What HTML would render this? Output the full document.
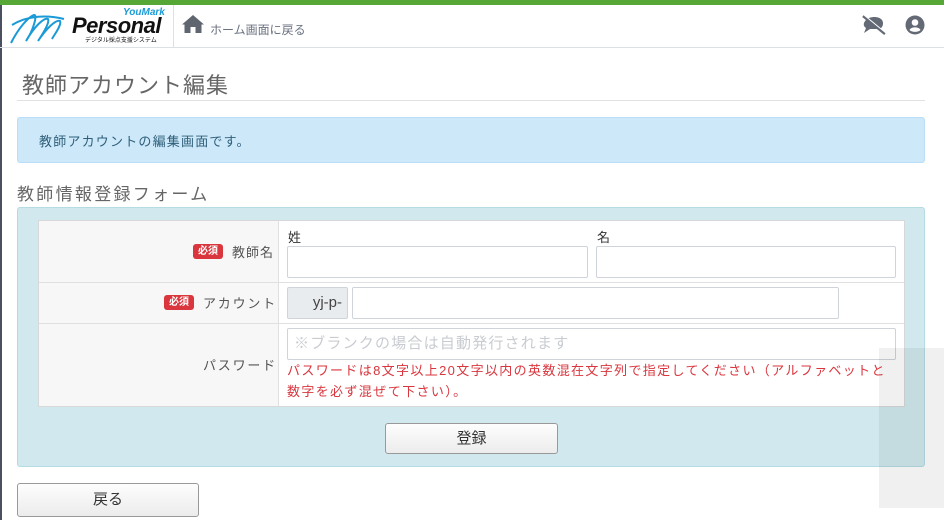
<!DOCTYPE html>
<html><head><meta charset="utf-8">
<style>
*{box-sizing:border-box;margin:0;padding:0}
body{width:944px;height:520px;overflow:hidden;background:#fff;font-family:"Liberation Sans","Noto Sans CJK JP",sans-serif;position:relative;color:#333}
.abs{position:absolute}
.lb{letter-spacing:1px}
.inp{position:absolute;border:1px solid #ced4da;background:#fff;border-radius:2px}
.btn{position:absolute;border:1px solid #999;border-radius:3px;background:linear-gradient(#fdfdfd,#ececec);text-align:center;font-size:15px;color:#333}
</style></head><body>
<div class="abs" style="left:0;top:0;width:944px;height:5px;background:#57a737"></div>
<div class="abs" style="left:0;top:5px;width:2px;height:515px;background:#4a5060"></div>
<div class="abs" style="left:0;top:47px;width:944px;height:1px;background:#dde0e4"></div>
<div class="abs" style="left:173px;top:5px;width:1px;height:42px;background:#dde0e4"></div>
<!-- logo -->
<svg class="abs" style="left:8px;top:9px" width="60" height="38" viewBox="0 0 60 38">
<path d="M3 34 C10 20 20 8 26 6 C30 5 25 22 18 32 C26 18 36 8 40 10 C42 14 34 26 30 32 C38 20 48 10 52 12 C54 16 46 26 44 30 M4 16 C20 6 40 6 56 10" fill="none" stroke="#1a9ad6" stroke-width="2"/>
</svg>
<div class="abs" style="left:123px;top:7px;font-size:10px;font-weight:bold;font-style:italic;color:#1a9ad6">YouMark</div>
<div class="abs" style="left:72px;top:13px;font-size:22px;font-weight:bold;font-style:italic;color:#111;letter-spacing:-0.5px">Personal</div>
<div class="abs" style="left:85px;top:35px;font-size:6px;color:#111">デジタル採点支援システム</div>
<svg class="abs" style="left:181px;top:14px" width="24" height="20" viewBox="0 0 24 20"><path d="M12 1 L1 10.5 L3.5 10.5 L3.5 19 L9.5 19 L9.5 13 L14.5 13 L14.5 19 L20.5 19 L20.5 10.5 L23 10.5 Z" fill="#5f6670"/></svg>
<div class="abs" style="left:210px;top:21px;font-size:12px;color:#6b7280">ホーム画面に戻る</div>
<svg class="abs" style="left:861px;top:15px" width="26" height="20" viewBox="0 0 26 20"><path d="M5 5 C9 1 18 1 21 5 C23 8 22 12 19 14 L9 14 L3 18 L5 13 C2 11 2 8 5 5Z" fill="#646a75"/><path d="M2 1 L24 19" stroke="#646a75" stroke-width="2.5"/><path d="M3 0 L25 18" stroke="#fff" stroke-width="1"/></svg>
<svg class="abs" style="left:905px;top:15px" width="20" height="20" viewBox="0 0 20 20"><circle cx="10" cy="10" r="9.5" fill="#646a75"/><circle cx="10" cy="7.5" r="3.3" fill="#fff"/><path d="M4.5 15 C6 11.5 14 11.5 15.5 15 C13 17.5 7 17.5 4.5 15Z" fill="#fff"/></svg>

<div class="abs" style="left:22px;top:68px;font-size:22px;color:#666;letter-spacing:1px">教師アカウント編集</div>
<div class="abs" style="left:17px;top:100px;width:908px;height:1px;background:#dfe1e3"></div>
<div class="abs" style="left:17px;top:117px;width:908px;height:46px;background:#cce8f9;border:1px solid #b9def5;border-radius:3px"></div>
<div class="abs lb" style="left:39px;top:131px;font-size:13px;color:#2f5f7a;letter-spacing:1.2px">教師アカウントの編集画面です。</div>
<div class="abs" style="left:17px;top:180px;font-size:17px;color:#666;letter-spacing:2.3px">教師情報登録フォーム</div>
<div class="abs" style="left:17px;top:207px;width:908px;height:260px;background:#d1e9ee;border:1px solid #b5dbe3;border-radius:3px"></div>
<div class="abs" style="left:38px;top:220px;width:867px;height:187px;background:#fff;border:1px solid #d8d8d8"></div>
<div class="abs" style="left:39px;top:221px;width:239px;height:185px;background:#f7f7f7"></div>
<div class="abs" style="left:278px;top:221px;width:1px;height:185px;background:#e0e0e0"></div>
<div class="abs" style="left:39px;top:282px;width:865px;height:1px;background:#e0e0e0"></div>
<div class="abs" style="left:39px;top:323px;width:865px;height:1px;background:#e0e0e0"></div>

<div class="abs" style="left:193px;top:244px;width:30px;height:15px;background:#d9363e;border-radius:3px;color:#fff;font-size:10px;font-weight:bold;text-align:center;line-height:15px">必須</div>
<div class="abs lb" style="left:232px;top:242px;font-size:13px;color:#555">教師名</div>
<div class="abs" style="left:164px;top:295px;width:30px;height:15px;background:#d9363e;border-radius:3px;color:#fff;font-size:10px;font-weight:bold;text-align:center;line-height:15px">必須</div>
<div class="abs" style="left:203px;top:293px;font-size:13px;color:#555;letter-spacing:1.8px">アカウント</div>
<div class="abs" style="left:203px;top:355px;font-size:13px;color:#555;letter-spacing:1.8px">パスワード</div>

<div class="abs" style="left:288px;top:227px;font-size:13px;color:#333">姓</div>
<div class="abs" style="left:597px;top:227px;font-size:13px;color:#333">名</div>
<div class="inp" style="left:287px;top:246px;width:301px;height:32px"></div>
<div class="inp" style="left:596px;top:246px;width:300px;height:32px"></div>
<div class="abs" style="left:287px;top:287px;width:61px;height:32px;background:#e9ecef;border:1px solid #ced4da;border-radius:2px;font-size:15px;color:#444;text-align:right;padding-right:5px;line-height:30px">yj-p-</div>
<div class="inp" style="left:352px;top:287px;width:487px;height:32px"></div>
<div class="inp" style="left:287px;top:328px;width:609px;height:32px;font-size:15px;color:#c8ccd1;padding-left:6px;line-height:29px;letter-spacing:1.2px">※ブランクの場合は自動発行されます</div>
<div class="abs" style="left:287px;top:360px;font-size:13px;color:#d9363e;line-height:21px;letter-spacing:1.35px;white-space:nowrap">パスワードは8文字以上20文字以内の英数混在文字列で指定してください（アルファベットと<br>数字を必ず混ぜて下さい）。</div>

<div class="btn" style="left:385px;top:423px;width:173px;height:31px;line-height:29px">登録</div>
<div class="btn" style="left:17px;top:483px;width:182px;height:34px;line-height:32px">戻る</div>
<div class="abs" style="left:879px;top:348px;width:65px;height:160px;background:rgba(0,0,0,0.06)"></div>
</body></html>
